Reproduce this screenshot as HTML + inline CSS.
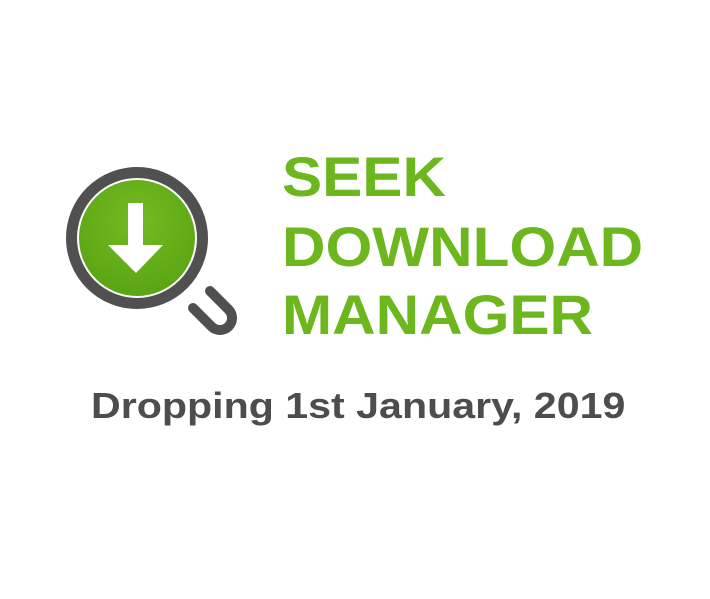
<!DOCTYPE html>
<html><head><style>
html,body{margin:0;padding:0;background:#fff;width:710px;height:599px;overflow:hidden;position:relative}
.t{position:absolute;font-family:"Liberation Sans",sans-serif;font-weight:bold;white-space:nowrap;transform-origin:0 0}
.g{color:#6cb71d;font-size:56px;left:282px;line-height:1;transform:scaleX(1.075)}
.d{color:#4d4d4d;font-size:36px;left:91px;top:388px;line-height:1;transform:scaleX(1.143)}
</style></head><body>
<svg width="710" height="599" style="position:absolute;left:0;top:0">
<defs><radialGradient id="gr" cx="50%" cy="35%" r="65%"><stop offset="0" stop-color="#74bb22"/><stop offset="1" stop-color="#5aa514"/></radialGradient></defs>
<circle cx="137" cy="238" r="65.5" fill="none" stroke="#505050" stroke-width="11"/>
<circle cx="137" cy="238" r="58" fill="url(#gr)"/>
<path d="M128 203 H143 V245 H163 L136 273 L108 245 H128 Z" fill="#fff"/>
<path d="M193 308 L211.5 326.5 A12 12 0 0 0 228.5 309.5 L210 291" fill="none" stroke="#505050" stroke-width="10" stroke-linecap="round"/>
</svg>
<div class="t g" style="top:149px">SEEK</div>
<div class="t g" style="top:219px">DOWNLOAD</div>
<div class="t g" style="top:287px">MANAGER</div>
<div class="t d">Dropping 1st January, 2019</div>
</body></html>
